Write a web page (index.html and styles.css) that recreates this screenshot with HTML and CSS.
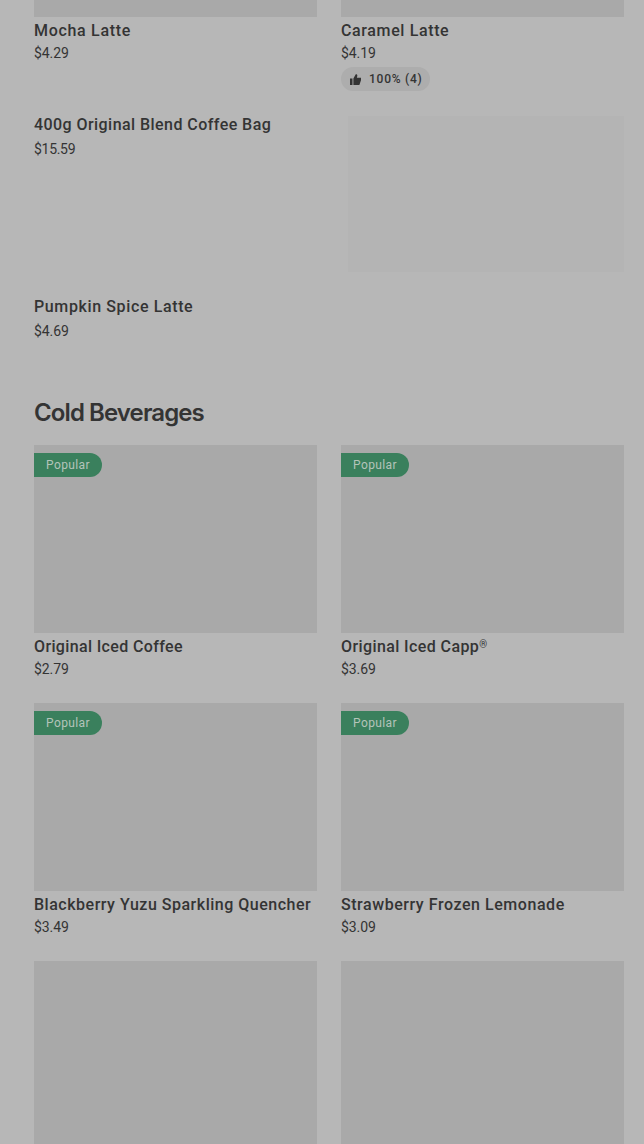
FILE: index.html
```html
<!DOCTYPE html>
<html lang="en">
<head>
<meta charset="utf-8">
<title>Menu</title>
<link rel="stylesheet" href="styles.css">
</head>
<body>
<main class="menu">
  <section class="grid grid-hot">
    <article class="card">
      <div class="photo photo-cut"></div>
      <h3 class="name"><span class="t-mocha">Mocha Latte</span></h3>
      <p class="price">$4.29</p>
    </article>
    <article class="card">
      <div class="photo photo-cut"></div>
      <h3 class="name"><span class="t-caramel">Caramel Latte</span></h3>
      <p class="price">$4.19</p>
      <div class="rating">
        <svg class="thumb" viewBox="0 0 12 12"><path d="M0 5h2.7v7H0zM3.7 5 6.3.3c1.2-.2 1.9.6 1.7 1.7L7.5 4.2H12v2.5L10.2 12H3.7z"/></svg>
        <span>100% (4)</span>
      </div>
    </article>
    <article class="plain">
      <h3 class="name"><span class="t-bag">400g Original Blend Coffee Bag</span></h3>
      <p class="price price-long">$15.59</p>
    </article>
    <div class="placeholder"></div>
    <article class="plain plain-last">
      <h3 class="name"><span class="t-pumpkin">Pumpkin Spice Latte</span></h3>
      <p class="price">$4.69</p>
    </article>
  </section>
  <h2 class="heading">Cold Beverages</h2>
  <section class="grid">
    <article class="card">
      <div class="photo"><span class="tag">Popular</span></div>
      <h3 class="name"><span class="t-iced">Original Iced Coffee</span></h3>
      <p class="price">$2.79</p>
    </article>
    <article class="card">
      <div class="photo"><span class="tag">Popular</span></div>
      <h3 class="name"><span class="t-capp">Original Iced Capp<span class="reg">®</span></span></h3>
      <p class="price">$3.69</p>
    </article>
    <article class="card">
      <div class="photo"><span class="tag">Popular</span></div>
      <h3 class="name"><span class="t-yuzu">Blackberry Yuzu Sparkling Quencher</span></h3>
      <p class="price">$3.49</p>
    </article>
    <article class="card">
      <div class="photo"><span class="tag">Popular</span></div>
      <h3 class="name"><span class="t-lemon">Strawberry Frozen Lemonade</span></h3>
      <p class="price">$3.09</p>
    </article>
    <div class="photo"></div>
    <div class="photo"></div>
  </section>
</main>
</body>
</html>
```
FILE: styles.css
```css
* { box-sizing: border-box; }
body {
  margin: 0;
  height: 1144px;
  overflow: hidden;
  background: #b7b7b7;
  color: #343434;
  font-family: Roboto, "Noto Sans", sans-serif;
}
h2, h3, p { margin: 0; }
.menu { padding: 0 20px 0 34px; }
.grid {
  display: grid;
  grid-template-columns: 283px 283px;
  gap: 24px;
}
.photo {
  height: 188px;
  padding-top: 8px;
  background: #a9a9a9;
}
.photo-cut { height: 17px; }
.name {
  height: 24px;
  padding-top: 2px;
  font-size: 16px;
  font-weight: 500;
  line-height: 24px;
  letter-spacing: 0.4px;
  white-space: nowrap;
}
.t-mocha { letter-spacing: 0.7px; }
.t-caramel { letter-spacing: 0.63px; }
.t-bag { letter-spacing: 0.44px; }
.t-pumpkin { letter-spacing: 0.62px; }
.t-iced { letter-spacing: 0.36px; }
.t-yuzu { letter-spacing: 0.51px; }
.t-lemon { letter-spacing: 0.55px; }
.reg {
  font-size: 10px;
  line-height: 0;
  vertical-align: 4px;
}
.price {
  height: 22px;
  padding-top: 1px;
  font-size: 14px;
  line-height: 22px;
  letter-spacing: -0.1px;
}
.price-long { letter-spacing: -0.3px; }
.card .price { height: 24px; }
.card .photo:not(.photo-cut) + .name + .price { height: 22px; }
.rating {
  display: flex;
  align-items: center;
  gap: 8px;
  width: 89px;
  height: 24px;
  margin: 2px 0 1px;
  padding-left: 9px;
  border-radius: 12px;
  background: #adadad;
  font-size: 12px;
  font-weight: 500;
  line-height: 22px;
  letter-spacing: 0.75px;
  white-space: nowrap;
}
.thumb { width: 11px; height: 11px; fill: #343434; }
.plain { height: 156px; }
.plain .name { padding-top: 0; line-height: 18px; }
.plain .price { padding-top: 0; line-height: 18px; }
.plain-last { height: 76px; padding-top: 2px; }
.placeholder {
  margin-left: 7px;
  height: 156px;
  background: #b4b4b4;
}
.heading {
  height: 73px;
  padding-top: 25px;
  font-family: Inter, sans-serif;
  font-size: 24px;
  font-weight: 600;
  line-height: 32px;
  letter-spacing: -0.9px;
}
.tag {
  display: block;
  width: 68px;
  height: 24px;
  padding-left: 12px;
  border-radius: 0 12px 12px 0;
  background: #3a805d;
  color: #b4c4ba;
  font-size: 12px;
  line-height: 24px;
  letter-spacing: 0.4px;
}
```
